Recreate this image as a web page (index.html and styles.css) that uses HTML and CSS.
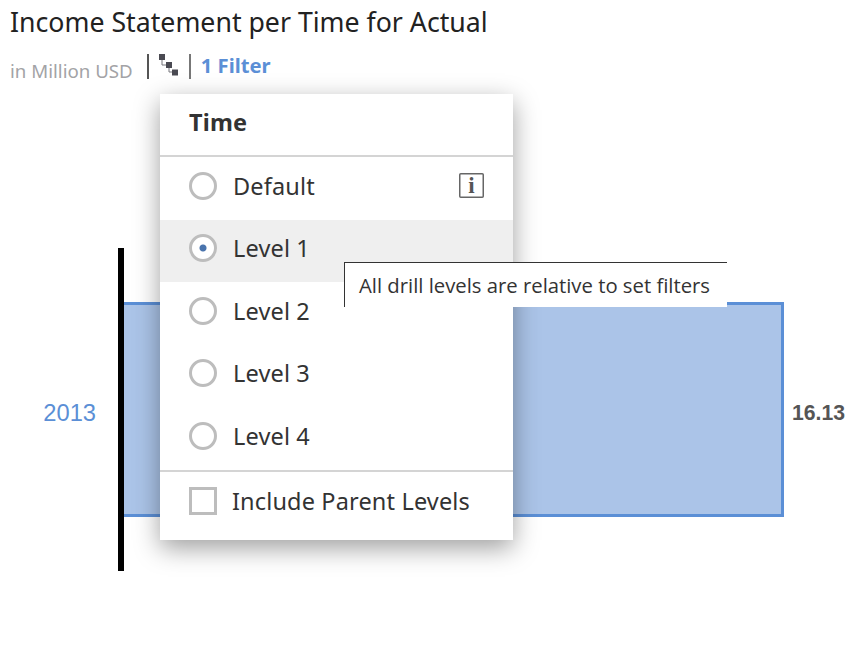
FILE: index.html
```html
<!DOCTYPE html>
<html lang="en">
<head>
  <meta charset="UTF-8">
  <meta name="viewport" content="width=device-width, initial-scale=1.0">
  <title>Income Statement per Time for Actual</title>
  <link rel="stylesheet" href="styles.css">
</head>
<body>
  <header class="chart-header">
    <h1>Income Statement per Time for Actual</h1>
    <div class="subtitle">
      <span class="unit">in Million USD</span>
      <span class="sep"></span>
      <svg class="drill-icon" width="20" height="22" viewBox="0 0 20 22">
        <path d="M3 3v8h7M10 11v7h6" fill="none" stroke="#77777c" stroke-width="1"/>
        <rect x="0" y="0" width="6" height="6" fill="#4a4a52"/>
        <rect x="7" y="8" width="6" height="6" fill="#4a4a52"/>
        <rect x="13" y="15.5" width="6" height="6" fill="#4a4a52"/>
      </svg>
      <span class="sep thin"></span>
      <a class="filter-link">1 Filter</a>
    </div>
  </header>

  <section class="chart">
    <div class="year">2013</div>
    <div class="axis"></div>
    <div class="bar"></div>
    <div class="value">16.13</div>
  </section>

  <div class="menu">
    <div class="menu-title">Time</div>
    <ul class="options">
      <li class="option"><span class="radio"></span>Default
        <svg class="info" width="25" height="25" viewBox="0 0 25 25">
          <rect x="0.75" y="0.75" width="23.5" height="23.5" rx="1" fill="none" stroke="#666" stroke-width="1.5"/>
          <text x="12.5" y="20" text-anchor="middle" font-family="Liberation Serif" font-weight="700" font-size="23" fill="#555">i</text>
        </svg>
      </li>
      <li class="option selected"><span class="radio"></span>Level 1</li>
      <li class="option"><span class="radio"></span>Level 2</li>
      <li class="option"><span class="radio"></span>Level 3</li>
      <li class="option"><span class="radio"></span>Level 4</li>
    </ul>
    <div class="menu-footer"><span class="checkbox"></span>Include Parent Levels</div>
  </div>

  <div class="tooltip">All drill levels are relative to set filters</div>
</body>
</html>
```

FILE: styles.css
```css
html, body {
  height: 100%;
}
body {
  margin: 0;
  background-color: white;
  font-family: 'Noto Sans', sans-serif;
  color: #333;
  overflow: hidden;
}
.chart-header {
  height: 248px;
  padding-left: 10px;
  box-sizing: border-box;
}
h1 {
  margin: 0;
  padding-top: 4px;
  font-size: 26.7px;
  line-height: 35px;
  font-weight: 400;
  color: #222;
}
.subtitle {
  display: flex;
  align-items: flex-start;
  margin-top: 15px;
}
.unit {
  margin-top: 4px;
  font-size: 18.7px;
  line-height: 26px;
  color: #a3a3a6;
}
.sep {
  width: 2px;
  height: 25px;
  margin-left: 14px;
  background-color: #555;
}
.sep.thin {
  background-color: #777;
}
.drill-icon {
  margin-left: 10px;
}
.drill-icon + .sep {
  margin-left: 10px;
}
.filter-link {
  margin-left: 10px;
  margin-top: -2px;
  font-size: 20.2px;
  line-height: 26px;
  font-weight: 700;
  color: #5b8fd6;
}

.chart {
  display: flex;
  align-items: center;
}
.year {
  width: 96px;
  margin-right: 22px;
  margin-top: 8px;
  text-align: right;
  font-size: 23.7px;
  color: #5b8fd6;
  font-family: 'Liberation Sans', sans-serif;
}
.axis {
  width: 6px;
  height: 323px;
  background-color: black;
}
.bar {
  width: 657px;
  height: 209px;
  background-color: #abc4e8;
  border: 3px solid #5b8fd6;
  border-left: none;
}
.value {
  margin-left: 8px;
  margin-top: 6px;
  font-size: 21.2px;
  font-weight: 700;
  color: #555;
  font-family: 'Liberation Sans', sans-serif;
}

.menu {
  position: absolute;
  left: 160px;
  top: 94px;
  width: 353px;
  height: 446px;
  background-color: white;
  box-shadow: 0 8px 24px rgba(0, 0, 0, 0.38);
  font-size: 23.5px;
  letter-spacing: 0.15px;
  color: #333;
}
.menu-title {
  height: 63px;
  padding-left: 29px;
  line-height: 57px;
  font-weight: 700;
  border-bottom: 2px solid #d4d4d4;
  box-sizing: border-box;
}
.options {
  list-style: none;
  margin: 0;
  padding: 0;
  border-bottom: 2px solid #d4d4d4;
}
.option {
  display: flex;
  align-items: center;
  box-sizing: border-box;
  height: 62.5px;
  padding: 0 29px 5px 29px;
}
.option.selected {
  background-color: #efefef;
}
.radio {
  width: 22px;
  height: 22px;
  margin-right: 16px;
  border: 3px solid #bdbdbd;
  border-radius: 50%;
  background-color: white;
  flex: none;
}
.selected .radio {
  background: radial-gradient(circle, #4a74ad 0 3px, white 4px);
}
.info {
  margin-left: auto;
}
.menu-footer {
  display: flex;
  align-items: center;
  padding: 13px 0 0 29px;
}
.checkbox {
  width: 22px;
  height: 22px;
  margin-right: 15px;
  border: 3px solid #bdbdbd;
  background-color: white;
}

.tooltip {
  position: absolute;
  left: 344px;
  top: 262px;
  width: 383px;
  height: 45px;
  padding-left: 14px;
  box-sizing: border-box;
  background-color: white;
  border-top: 1px solid #333;
  border-left: 1px solid #333;
  font-family: 'Open Sans', sans-serif;
  font-size: 20.3px;
  line-height: 45px;
  color: #333;
}
```
